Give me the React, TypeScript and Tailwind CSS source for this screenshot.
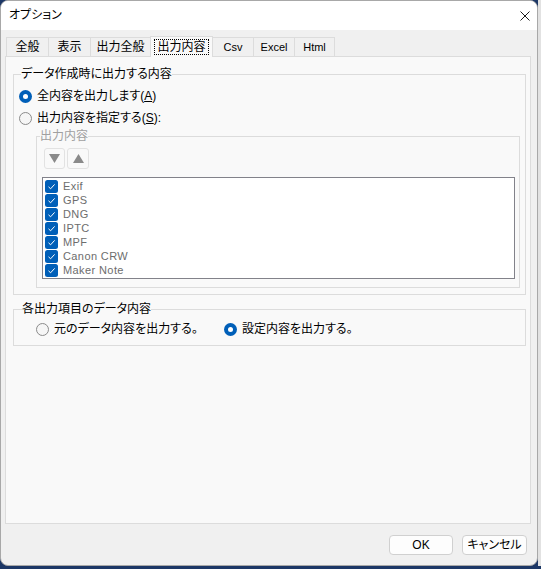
import React from 'react';

const font = "font-['Liberation_Sans','Noto_Sans_CJK_JP',sans-serif] [font-feature-settings:'palt']";

type Tab = { label: string; width: string; active?: boolean; latin?: boolean };

const tabs: Tab[] = [
  { label: '全般', width: 'w-[43px]' },
  { label: '表示', width: 'w-[43px]' },
  { label: '出力全般', width: 'w-[61px]' },
  { label: '出力内容', width: 'w-[63px]', active: true },
  { label: 'Csv', width: 'w-[42px]', latin: true },
  { label: 'Excel', width: 'w-[42px]', latin: true },
  { label: 'Html', width: 'w-[41px]', latin: true },
];

const items = ['Exif', 'GPS', 'DNG', 'IPTC', 'MPF', 'Canon CRW', 'Maker Note'];

function Radio({ checked }: { checked?: boolean }) {
  return (
    <svg width="13" height="13" viewBox="0 0 13 13" className="shrink-0">
      {checked ? (
        <>
          <circle cx="6.5" cy="6.5" r="6.5" fill="#005fb8" />
          <circle cx="6.5" cy="6.5" r="2.5" fill="#ffffff" />
        </>
      ) : (
        <circle cx="6.5" cy="6.5" r="6" fill="#f6f6f6" stroke="#8a8a8a" strokeWidth="1" />
      )}
    </svg>
  );
}

function Check() {
  return (
    <svg width="13" height="13" viewBox="0 0 13 13" className="shrink-0">
      <rect x="0" y="0" width="13" height="13" rx="2.5" fill="#005fb8" />
      <path d="M3.5 6.8 L5.6 8.8 L9.6 4.4" fill="none" stroke="#ffffff" strokeWidth="1" />
    </svg>
  );
}

function RadioRow({ checked, children, className = '' }: { checked?: boolean; children: React.ReactNode; className?: string }) {
  return (
    <div className={`flex h-[22px] items-center gap-[5px] ${className}`}>
      <Radio checked={checked} />
      <span className="leading-[15px] whitespace-nowrap">{children}</span>
    </div>
  );
}

export default function App() {
  return (
    <div className={`flex h-[569px] w-[541px] items-start bg-[#1c3766] text-[12px] text-black ${font}`}>
      <div className="flex h-[566px] w-[538px] flex-col overflow-hidden rounded-[8px] border border-[#a8a8a8] bg-[#f0f0f0]">
        {/* title bar */}
        <div className="flex h-[29px] shrink-0 items-center justify-between bg-white pl-[8px] pr-[7px]">
          <span className="leading-[15px]">オプション</span>
          <svg width="10" height="10" viewBox="0 0 10 10">
            <path d="M0.5 0.5 L9.5 9.5 M9.5 0.5 L0.5 9.5" stroke="#1a1a1a" strokeWidth="1" />
          </svg>
        </div>

        <div className="pl-[4px] pr-[6px]">
          {/* tabs */}
          <div className="flex h-[26px] items-end pl-px">
            {tabs.map((t, i) => (
              <div
                key={t.label}
                className={`${t.width} ${i > 0 ? '-ml-px' : ''} flex items-center justify-center border border-b-0 border-[#dcdcdc] ${
                  t.active ? 'relative z-10 -mb-px h-[21px] bg-[#f9f9f9]' : 'h-[19px] bg-[#f0f0f0]'
                }`}
              >
                {t.active ? (
                  <span className="border border-dotted border-black px-[2px] leading-[14px]">{t.label}</span>
                ) : (
                  <span className={`leading-[15px] ${t.latin ? 'text-[11px]' : ''}`}>{t.label}</span>
                )}
              </div>
            ))}
          </div>

          {/* panel */}
          <div className="h-[468px] border border-[#dcdcdc] bg-[#f9f9f9] pl-[7px] pr-[4px]">
            <fieldset className="mt-[10px] border border-[#dcdcdc] pb-[6px] pl-[5px] pr-[5px] pt-[3px]">
              <legend className="ml-[2px] leading-[15px]">データ作成時に出力する内容</legend>
              <RadioRow checked>
                全内容を出力します(<span className="underline">A</span>)
              </RadioRow>
              <RadioRow>
                出力内容を指定する(<span className="underline">S</span>):
              </RadioRow>

              <fieldset className="ml-[17px] border border-[#dcdcdc] pb-[8px] pl-[5px] pr-[4px] pt-[4px]">
                <legend className="ml-[-2px] leading-[15px] text-[#a0a0a0]">出力内容</legend>
                <div className="ml-[2px] flex gap-[2px]">
                  <div className="flex h-[21px] w-[21px] items-center justify-center rounded-[3px] border border-[#e2e2e2] bg-[#f9f9f9]">
                    <svg width="11" height="9" viewBox="0 0 11 9">
                      <path d="M0 0 H11 L5.5 9 Z" fill="#8a8a8a" />
                    </svg>
                  </div>
                  <div className="flex h-[21px] w-[22px] items-center justify-center rounded-[3px] border border-[#e2e2e2] bg-[#f9f9f9]">
                    <svg width="11" height="9" viewBox="0 0 11 9">
                      <path d="M0 9 H11 L5.5 0 Z" fill="#8a8a8a" />
                    </svg>
                  </div>
                </div>

                <div className="mt-[8px] h-[102px] border border-[#82828a] bg-white pl-[2px] pt-px">
                  {items.map((it) => (
                    <div key={it} className="flex h-[14px] items-center gap-[5px]">
                      <Check />
                      <span className="text-[11px] leading-[13px] tracking-[0.4px] text-[#6d6d6d]">{it}</span>
                    </div>
                  ))}
                </div>
              </fieldset>
            </fieldset>

            <fieldset className="mt-[7px] border border-[#dcdcdc] pb-[5px] pl-[22px] pt-px">
              <legend className="ml-[-14px] leading-[15px]">各出力項目のデータ内容</legend>
              <div className="flex">
                <RadioRow className="w-[188px]">元のデータ内容を出力する。</RadioRow>
                <RadioRow checked>設定内容を出力する。</RadioRow>
              </div>
            </fieldset>
          </div>
        </div>

        {/* footer */}
        <div className="mt-[11px] flex justify-end gap-[9px] pr-[10px]">
          <button className="flex h-[20px] w-[64px] items-center justify-center rounded-[4px] border border-[#d0d0d0] bg-[#fdfdfd] leading-[15px]">
            OK
          </button>
          <button className="flex h-[20px] w-[65px] items-center justify-center rounded-[4px] border border-[#d0d0d0] bg-[#fdfdfd] leading-[15px]">
            キャンセル
          </button>
        </div>
      </div>
      <div className="h-[566px] w-[3px] bg-[#e2e2e2]" />
    </div>
  );
}
